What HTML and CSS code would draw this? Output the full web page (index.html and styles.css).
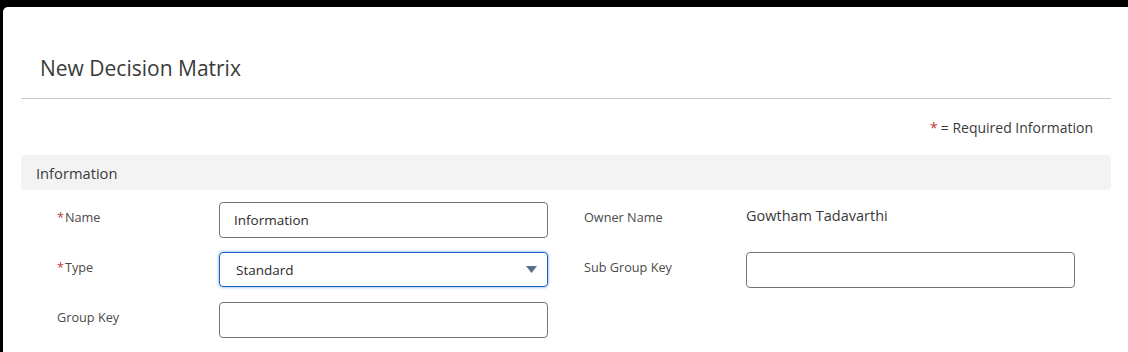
FILE: index.html
```html
<!DOCTYPE html>
<html lang="en">
    <head>
        <meta charset="UTF-8">
        <title>New Decision Matrix</title>
        <link rel="stylesheet" href="styles.css">
    </head>

    <body>

        <div class="modal">

            <div class="modal_header">
                <h2 class="title">New Decision Matrix</h2>
            </div>

            <p class="req_note"><span class="req">*</span>= Required Information</p>

            <div class="section_bar">Information</div>

            <div class="form_grid">

                <label class="field_label"><span class="req">*</span>Name</label>
                <div class="input_box"><span>Information</span></div>

                <label class="field_label right_label">Owner Name</label>
                <div class="static_val">Gowtham Tadavarthi</div>

                <label class="field_label"><span class="req">*</span>Type</label>
                <div class="input_box select_box">
                    <span>Standard</span>
                    <svg class="caret" width="11" height="7" viewBox="0 0 11 7"><path d="M0 0 L11 0 L5.5 7 Z" fill="#596d8c"/></svg>
                </div>

                <label class="field_label right_label">Sub Group Key</label>
                <div class="input_box"></div>

                <label class="field_label">Group Key</label>
                <div class="input_box"></div>

            </div>
        </div>

    </body>
</html>
```

FILE: styles.css
```css
body {
    margin: 0;
    background-color: black;
    overflow: hidden; /* no scrollbars */
    font-family: "Open Sans", "Noto Sans", sans-serif;
    color: #181818;
}

.modal {
    margin: 7px 0 0 3px;
    height: 345px;
    padding: 0 17px 0 18px;
    background-color: white;
    border-radius: 5px 0 0 0;
}

.modal_header {
    box-sizing: border-box;
    height: 92px;
    padding: 47px 0 0 19px;
    border-bottom: 1px solid #c9c9c9;
}

.title {
    margin: 0;
    font-size: 21px;
    line-height: 28px;
    font-weight: 400;
    color: #3a3a3a;
}

.req_note {
    margin: 0;
    padding: 19px 18px 0 0;
    box-sizing: border-box;
    height: 56px;
    text-align: right;
    font-size: 14px;
    color: #3a3a3a;
}

.req {
    color: #c23934;
    margin-right: 3px;
}

.section_bar {
    height: 35px;
    display: flex;
    align-items: center;
    padding-left: 15px;
    background-color: #f3f3f3;
    border-radius: 4px;
    font-size: 14.7px;
    color: #3a3a3a;
}

.form_grid {
    display: grid;
    grid-template-columns: 162px 329px 198px 329px;
    grid-auto-rows: 35px;
    row-gap: 15px;
    padding: 12px 0 0 36px;
}

.field_label {
    padding-top: 6px;
    font-size: 12.7px;
    color: #4a4a4a;
}

.field_label .req {
    margin-right: 1px;
}

.right_label {
    padding-left: 36px;
}

.input_box {
    box-sizing: border-box;
    height: 36px;
    border: 1px solid #747474;
    border-radius: 4px;
    display: flex;
    align-items: center;
    justify-content: space-between;
    padding: 0 10px 0 14px;
    font-size: 13.5px;
    color: #2b2b2b;
}

.select_box {
    height: 35px;
    border-color: #1b5fbf;
    box-shadow: 0 0 3px #5a9be0;
    padding-left: 16px;
}

.static_val {
    padding-top: 4px;
    font-size: 14.5px;
    color: #3a3a3a;
}
```
